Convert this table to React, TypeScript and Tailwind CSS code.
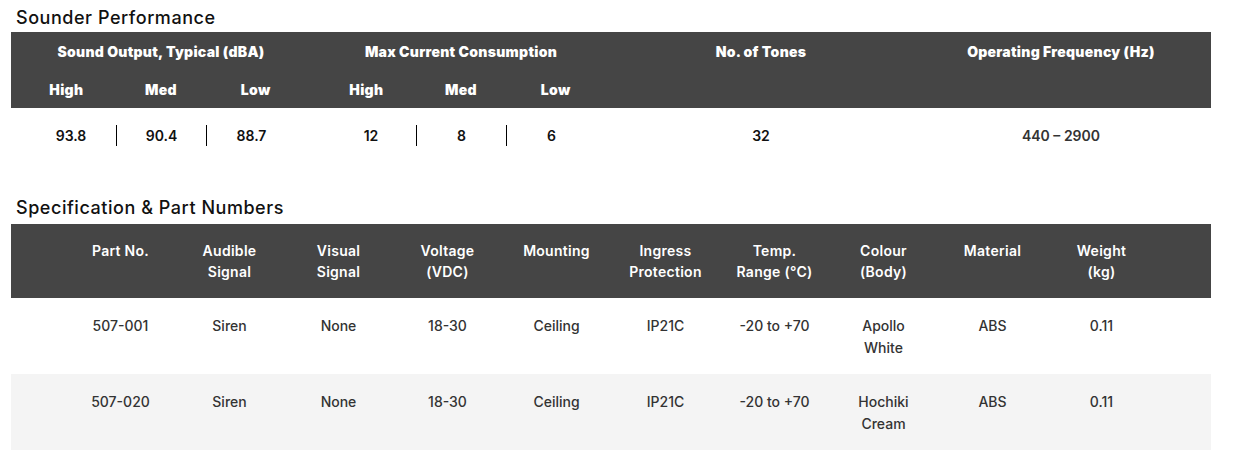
import React from "react";

const font = { fontFamily: "Inter, 'Noto Sans', sans-serif" };

function Tri({ vals }: { vals: string[] }) {
  return (
    <div className="flex justify-center">
      {vals.map((v, i) => (
        <div
          key={i}
          className={`w-[90px] h-[21px] flex items-center justify-center ${i > 0 ? "border-l border-black" : ""}`}
        >
          {v}
        </div>
      ))}
    </div>
  );
}

const headers: [string, string][] = [
  ["Part No.", ""],
  ["Audible", "Signal"],
  ["Visual", "Signal"],
  ["Voltage", "(VDC)"],
  ["Mounting", ""],
  ["Ingress", "Protection"],
  ["Temp.", "Range (°C)"],
  ["Colour", "(Body)"],
  ["Material", ""],
  ["Weight", "(kg)"],
];

const rows: [string, string][][] = [
  [
    ["507-001", ""],
    ["Siren", ""],
    ["None", ""],
    ["18-30", ""],
    ["Ceiling", ""],
    ["IP21C", ""],
    ["-20 to +70", ""],
    ["Apollo", "White"],
    ["ABS", ""],
    ["0.11", ""],
  ],
  [
    ["507-020", ""],
    ["Siren", ""],
    ["None", ""],
    ["18-30", ""],
    ["Ceiling", ""],
    ["IP21C", ""],
    ["-20 to +70", ""],
    ["Hochiki", "Cream"],
    ["ABS", ""],
    ["0.11", ""],
  ],
];

export default function App() {
  return (
    <div className="w-[1234px] h-[468px] bg-white text-black overflow-hidden" style={font}>
      {/* Section 1 */}
      <div className="h-[32px] pt-[2px] pl-[16px] flex items-center text-[18px] font-medium tracking-[0.03em] text-[#111]">
        Sounder Performance
      </div>
      <div className="ml-[11px] w-[1200px]">
        <div className="bg-[#454545] h-[76px] grid grid-cols-4 text-white font-black text-[14px] tracking-[0.02em]">
          <div className="flex flex-col">
            <div className="h-[38px] flex items-center justify-center">Sound Output, Typical (dBA)</div>
            <div className="h-[38px] px-[8px] grid grid-cols-3">
              <div className="flex items-center justify-center">High</div>
              <div className="flex items-center justify-center">Med</div>
              <div className="flex items-center justify-center">Low</div>
            </div>
          </div>
          <div className="flex flex-col">
            <div className="h-[38px] flex items-center justify-center">Max Current Consumption</div>
            <div className="h-[38px] px-[8px] grid grid-cols-3">
              <div className="flex items-center justify-center">High</div>
              <div className="flex items-center justify-center">Med</div>
              <div className="flex items-center justify-center">Low</div>
            </div>
          </div>
          <div className="flex flex-col">
            <div className="h-[38px] flex items-center justify-center">No. of Tones</div>
          </div>
          <div className="flex flex-col">
            <div className="h-[38px] flex items-center justify-center">Operating Frequency (Hz)</div>
          </div>
        </div>
        <div className="h-[54px] grid grid-cols-4 items-center text-[14px] font-semibold text-[#111]">
          <Tri vals={["93.8", "90.4", "88.7"]} />
          <Tri vals={["12", "8", "6"]} />
          <div className="flex justify-center">32</div>
          <div className="flex justify-center text-[#333]">440 – 2900</div>
        </div>
      </div>

      {/* Section 2 */}
      <div className="h-[62px] pt-[28px] pl-[16px] flex items-center text-[18px] font-medium tracking-[0.03em] text-[#111]">
        Specification &amp; Part Numbers
      </div>
      <div className="ml-[11px] w-[1200px]">
        <div className="bg-[#454545] h-[74px] pt-[16px] flex justify-center text-white font-semibold text-[14px] leading-[21px] tracking-[0.02em]">
          <div className="grid grid-cols-10 w-[1090px]">
            {headers.map(([a, b], i) => (
              <div key={i} className="flex flex-col items-center text-center">
                <div>{a}</div>
                {b && <div>{b}</div>}
              </div>
            ))}
          </div>
        </div>
        {rows.map((row, ri) => (
          <div
            key={ri}
            className={`h-[76px] pt-[17px] flex justify-center text-[14px] font-medium leading-[22px] text-[#333] ${ri === 1 ? "bg-[#f4f4f4]" : "bg-white"}`}
          >
            <div className="grid grid-cols-10 w-[1090px]">
              {row.map(([a, b], i) => (
                <div key={i} className="flex flex-col items-center text-center">
                  <div>{a}</div>
                  {b && <div>{b}</div>}
                </div>
              ))}
            </div>
          </div>
        ))}
      </div>
    </div>
  );
}
